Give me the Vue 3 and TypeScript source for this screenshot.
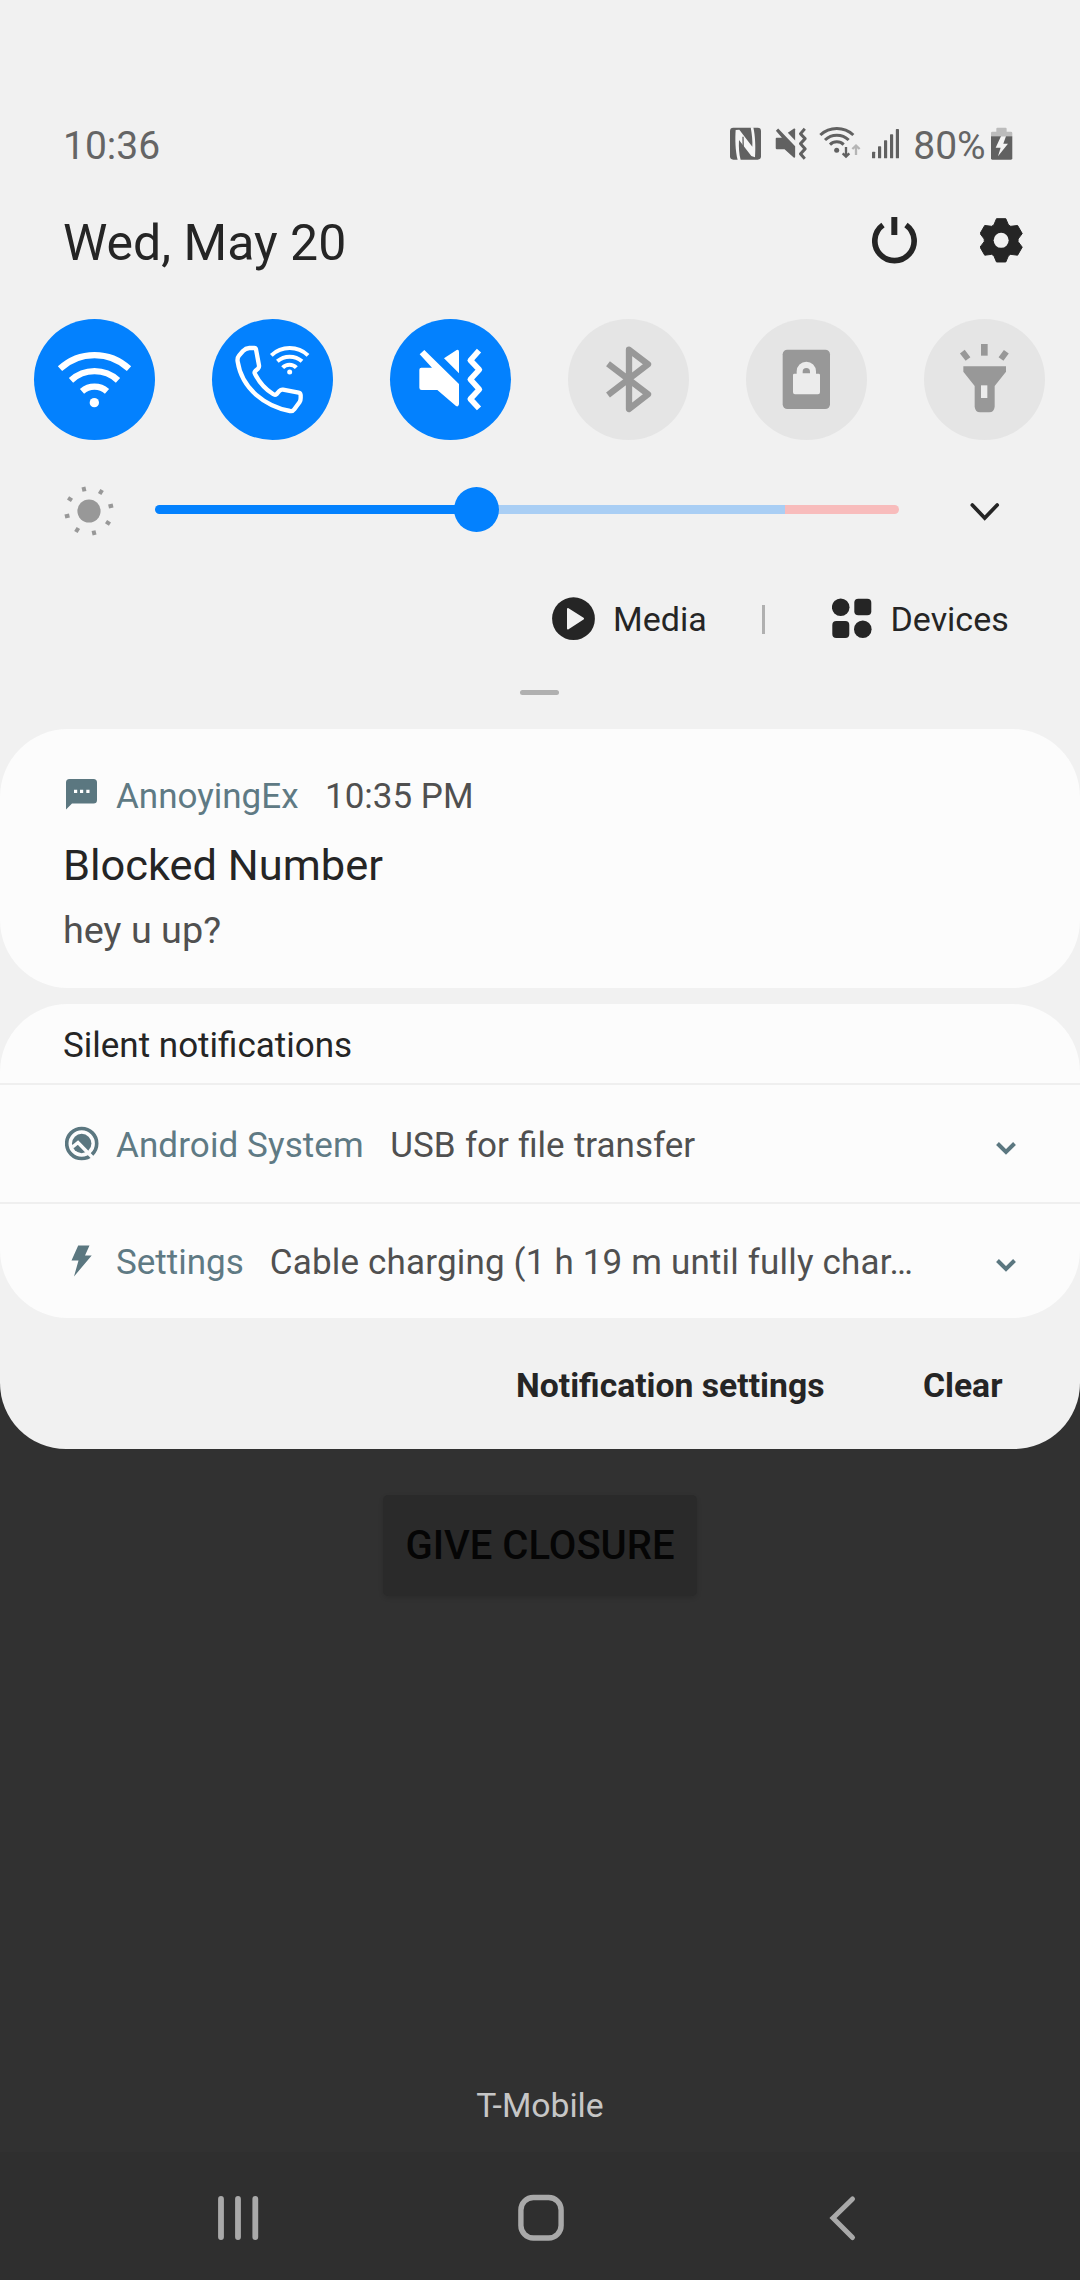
<script setup lang="ts">
interface Tile {
  name: string
  on: boolean
}

const tiles: Tile[] = [
  { name: 'wifi', on: true },
  { name: 'wifi-calling', on: true },
  { name: 'mute', on: true },
  { name: 'bluetooth', on: false },
  { name: 'lock', on: false },
  { name: 'flashlight', on: false },
]

const silent = [
  { app: 'Android System', text: 'USB for file transfer', icon: 'system' },
  { app: 'Settings', text: 'Cable charging (1 h 19 m until fully char…', icon: 'bolt' },
]

const sunRays = [0, 45, 90, 135, 180, 225, 270, 315].map((a) => a - 13)

// Six-tooth gear outline around the origin
const tooth: [number, number][] = [[-22, -46], [-14, -65], [14, -65], [22, -46]]
const gear = [0, 1, 2, 3, 4, 5]
  .flatMap((k) => {
    const t = (k * Math.PI) / 3
    return tooth.map(([x, y]) =>
      `${(x * Math.cos(t) - y * Math.sin(t)).toFixed(1)},${(x * Math.sin(t) + y * Math.cos(t)).toFixed(1)}`)
  })
  .join(' ')
</script>

<template>
  <div class="screen">
    <section class="panel">
      <div class="status">
        <span class="clock">10:36</span>
        <div class="status-icons">
          <svg class="nfc" viewBox="0 0 93 180">
            <rect y="35" width="93" height="96" rx="10" fill="#616161" />
            <path d="M17 42L28 41L67 92C68 75 66 55 62 34L70 34C76 60 77 95 75 124L64 120L27 72C26 95 27 112 32 132L23 132C16 105 15 70 17 42Z" fill="#f5f5f5" />
            <path d="M39 62L40 113" stroke="#616161" stroke-width="4" />
          </svg>
          <svg class="st-mute" viewBox="0 0 95 180">
            <g transform="translate(-41 -11) scale(.49 .52)" fill="#616161">
              <path d="M162 118L200 93Q207 91 207 98V163Z" />
              <path d="M89 106L103 93L207 195V256Q205 265 198 261L142 213H95Q88 213 88 206V152Q88 146 94 146H126Z" />
              <path d="M266 95L240 124L268 152L240 181L268 211L240 240L266 268" fill="none" stroke="#616161" stroke-width="18" stroke-linejoin="round" />
            </g>
          </svg>
          <svg class="st-wifi" viewBox="0 0 126 180" fill="none" stroke="#616161" stroke-width="9">
            <path d="M4 57A73 73 0 0 1 103 57M18 72A51 51 0 0 1 89 72M33 86A29 29 0 0 1 74 86" />
            <circle cx="53" cy="103" r="7.500" fill="#616161" stroke="none" />
            <path d="M81 93V122M71 112L81 122L91 112" stroke-width="7" />
            <path d="M111 117V90M100 99L111 89L122 99" stroke="#b5b5b5" stroke-width="7" />
          </svg>
          <svg class="signal" viewBox="0 0 81 180" fill="#616161">
            <rect x="0" y="107" width="9.500" height="20" rx="2" />
            <rect x="18" y="91" width="9.500" height="36" rx="2" />
            <rect x="36" y="73" width="9.500" height="54" rx="2" />
            <rect x="54" y="55" width="9.500" height="72" rx="2" />
            <rect x="71.500" y="39" width="9.500" height="88" rx="2" />
          </svg>
          <span class="pct">80%</span>
          <svg class="battery" viewBox="0 0 64 180">
            <path d="M16 38Q16 35 19 35H44Q47 35 47 38V47H60Q64 47 64 51V61H0V51Q0 47 4 47H16Z" fill="#bcbcbc" />
            <path d="M0 61H64V127Q64 131 60 131H4Q0 131 0 127Z" fill="#616161" />
            <path d="M30 61H45L37 83H51L21 121L29 95H14Z" fill="#f5f5f5" />
          </svg>
        </div>
      </div>

      <div class="date-row">
        <span class="date">Wed, May 20</span>
        <div class="actions">
          <svg class="power" viewBox="0 0 136 240">
            <path d="M33 66A59 59 0 1 0 102 66" fill="none" stroke="#252525" stroke-width="17" />
            <rect x="58" y="42" width="18" height="54" fill="#252525" />
          </svg>
          <svg class="gear" viewBox="0 0 127 240">
            <g transform="translate(63.5 112)">
              <polygon :points="gear" fill="#252525" stroke="#252525" stroke-width="3" stroke-linejoin="round" />
              <circle r="22.5" fill="#f1f1f1" />
            </g>
          </svg>
        </div>
      </div>

      <div class="tiles">
        <div v-for="t in tiles" :key="t.name" class="tile" :class="{ on: t.on }">
          <svg v-if="t.name === 'wifi'" viewBox="0 0 363 363" fill="none" stroke="#fff" stroke-width="19">
            <path d="M78 149A152 152 0 0 1 285 149M111 184A104 104 0 0 1 252 184M144 217A57 57 0 0 1 219 217" />
            <circle cx="181" cy="251" r="14" fill="#fff" stroke="none" />
          </svg>
          <svg v-else-if="t.name === 'wifi-calling'" viewBox="0 0 363 363" fill="none" stroke="#fff" stroke-width="13" stroke-linejoin="round">
            <path d="M112 87H127Q131 87 132 91L141 139Q142 145 138 149L130 156Q126 160 129 165C143 192 162 212 183 225Q189 229 194 225L203 215Q207 211 213 212L260 221Q265 222 266 228V237Q266 244 263 249L247 271Q242 278 234 276C160 262 90 210 77 128Q75 117 81 110L93 96Q101 88 112 87Z" />
            <path d="M178 109A80 80 0 0 1 288 109M196 127A56 56 0 0 1 270 127M212 146A28 28 0 0 1 253 146" stroke-width="12" />
            <circle cx="233" cy="159" r="7.5" fill="#fff" stroke="none" />
          </svg>
          <svg v-else-if="t.name === 'mute'" viewBox="0 0 363 363" fill="#fff">
            <path d="M162 118L200 93Q207 91 207 98V163Z" />
            <path d="M89 106L103 93L207 195V256Q205 265 198 261L142 213H95Q88 213 88 206V152Q88 146 94 146H126Z" />
            <path d="M267 95L241 124L268 152L241 181L268 211L241 240L267 268" fill="none" stroke="#fff" stroke-width="17" stroke-linejoin="round" />
          </svg>
          <svg v-else-if="t.name === 'bluetooth'" viewBox="0 0 363 363" fill="none" stroke="#989898" stroke-width="19" stroke-linejoin="round">
            <path d="M120 134L240 226L183 270V92L240 136L120 228" />
          </svg>
          <svg v-else-if="t.name === 'lock'" viewBox="0 0 363 363">
            <rect x="110" y="92" width="142" height="178" rx="14" fill="#989898" />
            <path d="M152 164V157A29 29 0 0 1 210 157V164H218Q222 164 222 168V220Q222 226 216 226H147Q141 226 141 220V168Q141 164 145 164Z" fill="#ececec" />
            <path d="M170 163V158A11 11 0 0 1 192 158V163Z" fill="#989898" />
          </svg>
          <svg v-else viewBox="0 0 363 363" fill="#989898">
            <rect x="171" y="75" width="20" height="35" />
            <path d="M115 98L132 120M247 98L231 120" stroke="#989898" stroke-width="18" />
            <path d="M118 142H246V158L212 201V263Q210 280 196 280H168Q154 280 152 263V201L118 158Z" />
            <rect x="171" y="199" width="19" height="38" fill="#ececec" />
          </svg>
        </div>
      </div>

      <div class="brightness">
        <svg class="sun" viewBox="-25 -40 50 80" fill="#989898">
          <circle cy="2" r="11.6" />
          <g transform="translate(0 2)">
            <rect v-for="a in sunRays" :key="a" x="-2" y="-24.7" width="4" height="4.6" :transform="`rotate(${a})`" />
          </g>
        </svg>
        <div class="slider">
          <div class="fill"></div>
          <div class="rest"></div>
          <div class="warn"></div>
          <div class="thumb"></div>
        </div>
        <svg class="expand" viewBox="0 0 30 80" fill="none" stroke="#252525" stroke-width="3.7" stroke-linecap="round">
          <path d="M2.300 36L14.7 49L27.200 36" />
        </svg>
      </div>

      <div class="shortcuts">
        <svg class="play" viewBox="0 0 43 60">
          <circle cx="21.5" cy="29.7" r="21.4" fill="#252525" />
          <path d="M16 20L31 29.7L16 39.5Z" fill="#f1f1f1" stroke="#f1f1f1" stroke-width="2" stroke-linejoin="round" />
        </svg>
        <span class="media">Media</span>
        <i class="sep"></i>
        <svg class="dots" viewBox="0 0 40 60" fill="#252525">
          <circle cx="8.7" cy="18.2" r="8.8" />
          <rect x="22.3" y="9.7" width="17" height="16.5" rx="4" />
          <rect x="0.3" y="32" width="17" height="17" rx="4" />
          <circle cx="30.8" cy="40.2" r="8.8" />
        </svg>
        <span class="devices">Devices</span>
      </div>

      <div class="handle"></div>

      <article class="card">
        <header class="app-line">
          <svg class="app-icon msg" viewBox="0 0 36 50">
            <path d="M4.500 7H28.500Q32 7 32 10.500V28Q32 31.500 28.500 31.500H7L1 37.500V10.500Q1 7 4.500 7Z" fill="#5b7780" />
            <path d="M9 17.700h3.200v3.200H9zM15 17.700h3.200v3.200H15zM21.300 17.700h3.200v3.200H21.300z" fill="#fff" />
          </svg>
          <span class="app-name">AnnoyingEx</span>
          <span class="sub">10:35 PM</span>
        </header>
        <h2>Blocked Number</h2>
        <p>hey u up?</p>
      </article>

      <article class="silent">
        <h3>Silent notifications</h3>
        <div v-for="n in silent" :key="n.app" class="silent-row" :class="n.icon">
          <svg v-if="n.icon === 'system'" class="app-icon" viewBox="0 0 36 50">
            <circle cx="16.700" cy="22.500" r="15" fill="none" stroke="#5b7780" stroke-width="3.600" />
            <circle cx="16.700" cy="22.500" r="9.700" fill="#5b7780" />
            <path d="M7.500 26L13 21.500L29 38" fill="none" stroke="#fcfcfc" stroke-width="3.400" />
          </svg>
          <svg v-else class="app-icon" viewBox="0 0 36 50">
            <path d="M13.200 7.500H24.500L20 17.500H26.700L9 38.500L13.500 22.500H6.500Z" fill="#5b7780" />
          </svg>
          <span class="app-name">{{ n.app }}</span>
          <span class="sub">{{ n.text }}</span>
          <svg class="chev" viewBox="0 0 22 50" fill="none" stroke="#5b7780" stroke-width="4">
            <path d="M2.500 22.500L11 31L19.500 22.500" />
          </svg>
        </div>
      </article>

      <footer class="footer">
        <span class="nset">Notification settings</span>
        <span class="clear">Clear</span>
      </footer>
    </section>

    <main class="behind">
      <div class="closure">GIVE CLOSURE</div>
      <div class="carrier">T-Mobile</div>
    </main>

    <nav class="nav">
      <svg class="recents" viewBox="0 0 41 60" stroke="#a9a9a9" stroke-width="5.800" stroke-linecap="round">
        <path d="M3 11V49M20 11V49M37.300 11V49" />
      </svg>
      <svg class="home" viewBox="0 0 46 60" fill="none" stroke="#a9a9a9" stroke-width="5.400">
        <rect x="2.900" y="9.500" width="40.200" height="40.500" rx="12.500" />
      </svg>
      <svg class="back" viewBox="0 0 28 60" fill="none" stroke="#a9a9a9" stroke-width="5" stroke-linecap="round">
        <path d="M23.500 11L4 30L23.500 49.500" />
      </svg>
    </nav>
  </div>
</template>

<style>
body {
  margin: 0;
  background: #313131;
}
</style>

<style scoped>
.screen {
  width: 1080px;
  height: 2280px;
  display: flex;
  flex-direction: column;
  background: #313131;
  font-family: Roboto, sans-serif;
  overflow: hidden;
}
.screen span {
  white-space: nowrap;
}
svg {
  display: block;
  flex: none;
}
.panel {
  box-sizing: border-box;
  flex: none;
  height: 1449px;
  padding-top: 116px;
  background: #f1f1f1;
  border-radius: 0 0 66px 66px;
  overflow: hidden;
  color: #252525;
}
.status {
  display: flex;
  justify-content: space-between;
  height: 60px;
  line-height: 60px;
  padding: 0 67.500px 0 63px;
  font-size: 39px;
  color: #656565;
}
.status-icons {
  display: flex;
}
.nfc { width: 31px; height: 60px; }
.st-mute { width: 31.700px; height: 60px; margin-left: 14px; }
.st-wifi { width: 42px; height: 60px; margin-left: 12px; }
.signal { width: 27px; height: 60px; margin-left: 11.300px; }
.pct { width: 72.300px; margin-left: 14px; }
.battery { width: 21.300px; height: 60px; margin-left: 5.700px; }
.date-row {
  display: flex;
  justify-content: space-between;
  height: 80px;
  line-height: 80px;
  margin-top: 27px;
  padding: 0 57.300px 0 63px;
}
.date {
  font-size: 50px;
}
.actions {
  display: flex;
  gap: 63px;
}
.power { width: 45.300px; height: 80px; }
.gear { width: 42.300px; height: 80px; }
.tiles {
  display: flex;
  gap: 57px;
  margin-top: 36px;
  padding-left: 34px;
}
.tile {
  width: 121px;
  height: 121px;
  border-radius: 50%;
  background: #e5e5e5;
}
.tile.on {
  background: #0381fe;
}
.tile svg {
  width: 121px;
  height: 121px;
}
.brightness {
  display: flex;
  align-items: center;
  height: 80px;
  margin-top: 29px;
  padding-left: 64px;
}
.sun { width: 50px; height: 80px; }
.slider {
  position: relative;
  display: flex;
  width: 744px;
  height: 9px;
  margin-left: 41px;
}
.fill {
  width: 322px;
  border-radius: 4.500px 0 0 4.500px;
  background: #0381fe;
}
.rest {
  width: 308px;
  background: #a9cef4;
}
.warn {
  flex: 1;
  border-radius: 0 4.500px 4.500px 0;
  background: #f8bcbc;
}
.thumb {
  position: absolute;
  left: 299px;
  top: -18px;
  width: 45px;
  height: 45px;
  border-radius: 50%;
  background: #0381fe;
}
.expand { width: 30px; height: 80px; margin-left: 71px; }
.shortcuts {
  display: flex;
  align-items: center;
  height: 60px;
  line-height: 60px;
  margin-top: 40px;
  padding-left: 552px;
  font-size: 34px;
}
.play { width: 43px; height: 60px; }
.media { width: 149px; margin-left: 18px; }
.sep {
  width: 3px;
  height: 29px;
  background: #b0b0b0;
}
.dots { width: 40px; height: 60px; margin-left: 67px; }
.devices { margin-left: 18.500px; }
.handle {
  width: 39px;
  height: 5px;
  margin: 41px 0 0 520px;
  border-radius: 2.500px;
  background: #b0b0b0;
}
.card {
  box-sizing: border-box;
  height: 259px;
  margin-top: 34px;
  padding: 43px 65px 0;
  border-radius: 68px;
  background: #fcfcfc;
}
.app-line {
  display: flex;
  height: 50px;
  line-height: 50px;
  font-size: 35px;
}
.app-icon {
  width: 36px;
  height: 50px;
}
.app-name {
  margin-left: 15px;
  color: #5f7a84;
}
.sub {
  margin-left: 26.500px;
  color: #505050;
}
h2, h3, p {
  margin: 0;
  font-weight: 400;
}
h2 {
  margin: 14px 0 0 -2px;
  font-size: 43.400px;
  line-height: 60px;
}
p {
  margin: 9px 0 0 -2px;
  font-size: 37.800px;
  line-height: 50px;
  color: #505050;
}
.silent {
  height: 314px;
  margin-top: 16px;
  border-radius: 68px;
  background: #fcfcfc;
  overflow: hidden;
}
h3 {
  box-sizing: border-box;
  height: 79px;
  padding: 4px 0 0 63px;
  font-size: 35px;
  line-height: 76px;
}
.silent-row {
  box-sizing: border-box;
  display: flex;
  align-items: center;
  height: 119px;
  padding: 4px 0 0 65px;
  border-top: 2px solid #efefef;
  font-size: 35px;
  line-height: 50px;
}
.silent-row:last-child {
  height: 116px;
  padding-top: 3px;
}
.system .app-name {
  letter-spacing: 0.1px;
}
.system .sub {
  word-spacing: 0.6px;
}
.bolt .sub {
  margin-left: 26px;
  letter-spacing: 0.170px;
}
.chev {
  width: 22px;
  height: 50px;
  margin-left: auto;
  margin-right: 63px;
}
.footer {
  display: flex;
  height: 127px;
  padding: 4px 0 0 516px;
  font-size: 33.700px;
  font-weight: 700;
  line-height: 128px;
}
.clear {
  margin-left: 98.500px;
}
.behind {
  display: flex;
  flex-direction: column;
  align-items: center;
  flex: none;
  box-sizing: border-box;
  height: 703px;
  padding-top: 46px;
}
.closure {
  width: 314px;
  height: 101px;
  line-height: 102px;
  border-radius: 5px;
  background: #2a2a2a;
  box-shadow: 0 2px 5px rgba(0, 0, 0, 0.12);
  color: #050505;
  font-size: 40px;
  font-weight: 500;
  text-align: center;
}
.carrier {
  margin-top: 485px;
  font-size: 33.700px;
  line-height: 50px;
  color: #c6c6c6;
}
.nav {
  display: flex;
  align-items: center;
  flex: none;
  box-sizing: border-box;
  height: 128px;
  padding: 3px 0 0 218px;
  background: #2f2f2f;
}
.recents { width: 41px; height: 60px; }
.home { width: 46px; height: 60px; margin-left: 258.500px; }
.back { width: 28px; height: 60px; margin-left: 265px; }
</style>
